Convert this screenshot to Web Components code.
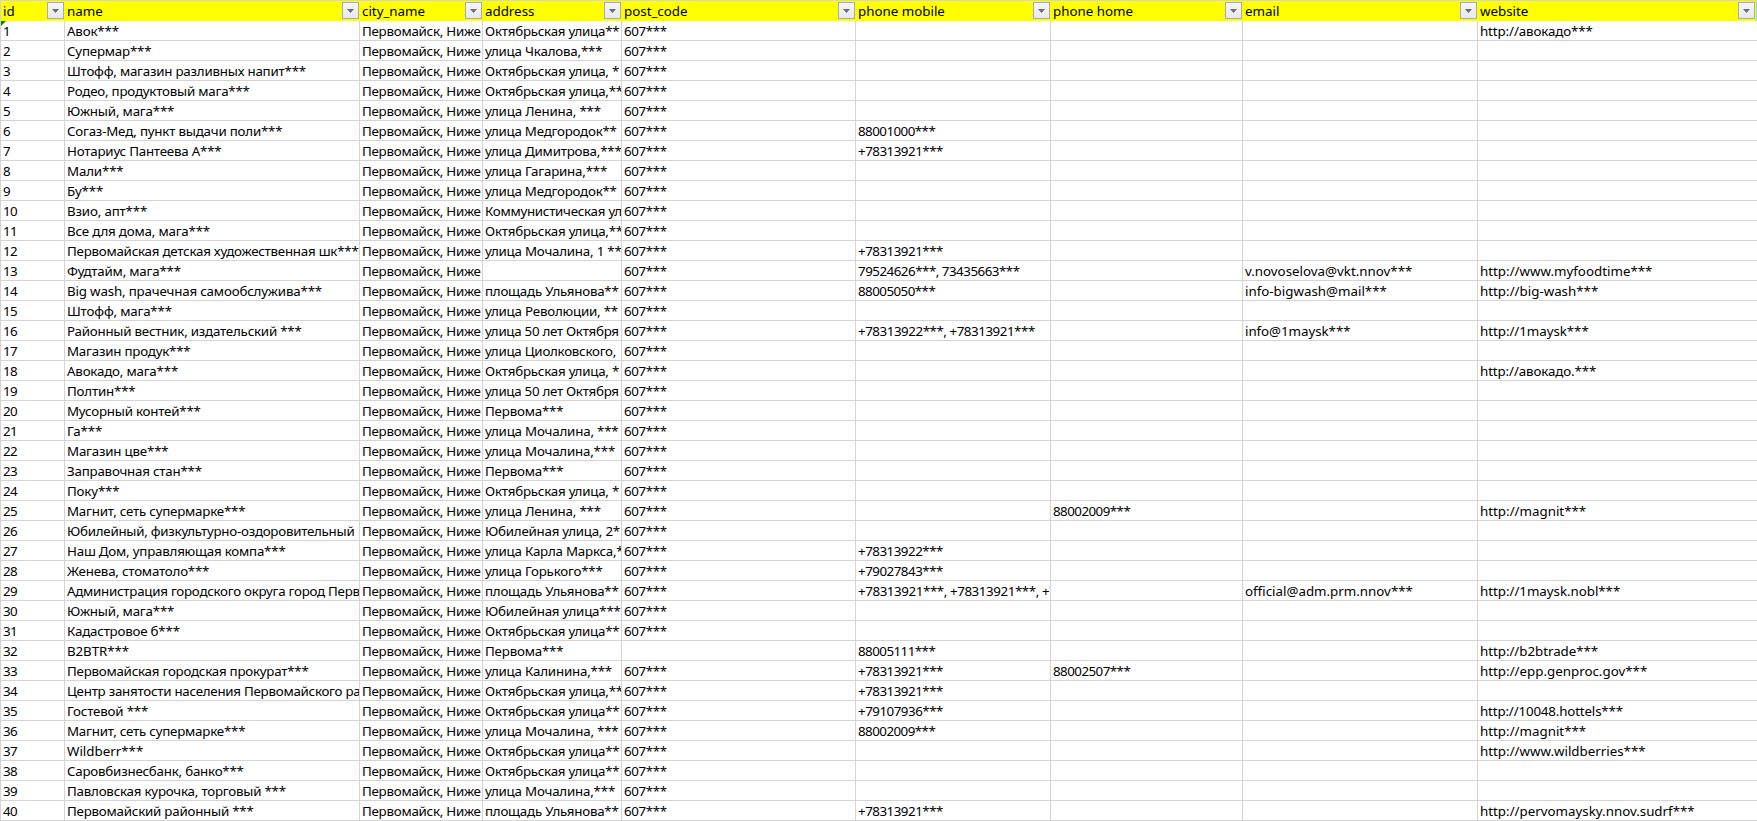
<!DOCTYPE html>
<html lang="ru">
<head>
<meta charset="utf-8">
<title>Sheet</title>
<style>
html,body{margin:0;padding:0;background:#fff;overflow:hidden}
body{font-family:"Noto Sans","Open Sans",sans-serif;font-size:13.33px;color:#000}
</style>
</head>
<body>
<xl-sheet id="sheet"></xl-sheet>
<script>
const COLS='64px 295px 123px 139px 234px 195px 192px 235px 279px';

class XlSheet extends HTMLElement{
  constructor(){super();this.attachShadow({mode:'open'}).innerHTML=`<style>
    :host{display:flex;flex-direction:column;width:1757px;height:821px;overflow:hidden;box-sizing:border-box;
      border-top:1px solid #d4d4d4;border-left:1px solid #d4d4d4;background:#fff}
  </style><slot></slot>`;}
}
class XlRow extends HTMLElement{
  constructor(){super();this.attachShadow({mode:'open'}).innerHTML=`<style>
    :host{display:grid;grid-template-columns:${COLS};height:20px;flex:none}
  </style><slot></slot>`;}
}
class XlHead extends HTMLElement{
  constructor(){super();this.attachShadow({mode:'open'}).innerHTML=`<style>
    :host{display:flex;align-items:flex-start;background:#ffff00;height:20px;min-width:0;overflow:hidden;box-sizing:border-box}
    :host([last]){border-right:1px solid #8fe8b0}
    .t{flex:1;min-width:0;padding-left:2px;line-height:21px;white-space:nowrap;overflow:hidden}
    .b{flex:none;width:17px;height:17px;margin:1px 1px 0 0;box-sizing:border-box;border:1px solid #a6a9b8;
       background:linear-gradient(#f6f7f9,#e6e8ee);display:flex;align-items:center;justify-content:center}
    svg{display:block}
  </style><span class="t"><slot></slot></span>
  <span class="b"><svg width="7" height="4" viewBox="0 0 7 4"><path d="M0 0H7L3.5 4Z" fill="#6e6e6e"/></svg></span>`;}
}
class XlCell extends HTMLElement{
  constructor(){super();this.attachShadow({mode:'open'}).innerHTML=`<style>
    :host{display:block;position:relative;height:20px;min-width:0;overflow:hidden;box-sizing:border-box;
      border-right:1px solid #d4d4d4;border-bottom:1px solid #d4d4d4;padding-left:2px;line-height:21px;white-space:nowrap}
    :host([last]){border-right:0}
    .flag{display:none;position:absolute;left:0;top:0;width:0;height:0;border-top:5px solid #0a7d0a;border-right:5px solid transparent}
    :host([flag]) .flag{display:block}
  </style><span class="flag"></span><slot></slot>`;}
}
customElements.define('xl-sheet',XlSheet);
customElements.define('xl-row',XlRow);
customElements.define('xl-head',XlHead);
customElements.define('xl-cell',XlCell);

const O='Октябрьская улица**', U='площадь Ульянова**';
const rows=[
['Авок***',O,'607***','','','','http://авокадо***'],
['Супермар***','улица Чкалова,***','607***'],
['Штофф, магазин разливных напит***','Октябрьская улица, *','607***'],
['Родео, продуктовый мага***','Октябрьская улица,**','607***'],
['Южный, мага***','улица Ленина, ***','607***'],
['Согаз-Мед, пункт выдачи поли***','улица Медгородок**','607***','88001000***'],
['Нотариус Пантеева А***','улица Димитрова,***','607***','+78313921***'],
['Мали***','улица Гагарина,***','607***'],
['Бу***','улица Медгородок**','607***'],
['Взио, апт***','Коммунистическая ул','607***'],
['Все для дома, мага***','Октябрьская улица,**','607***'],
['Первомайская детская художественная шк***','улица Мочалина, 1 **','607***','+78313921***'],
['Фудтайм, мага***','','607***','79524626***, 73435663***','','v.novoselova@vkt.nnov***','http://www.myfoodtime***'],
['Big wash, прачечная самообслужива***',U,'607***','88005050***','','info-bigwash@mail***','http://big-wash***'],
['Штофф, мага***','улица Революции, **','607***'],
['Районный вестник, издательский ***','улица 50 лет Октября','607***','+78313922***, +78313921***','','info@1maysk***','http://1maysk***'],
['Магазин продук***','улица Циолковского,','607***'],
['Авокадо, мага***','Октябрьская улица, *','607***','','','','http://авокадо.***'],
['Полтин***','улица 50 лет Октября','607***'],
['Мусорный контей***','Первома***','607***'],
['Га***','улица Мочалина, ***','607***'],
['Магазин цве***','улица Мочалина,***','607***'],
['Заправочная стан***','Первома***','607***'],
['Поку***','Октябрьская улица, *','607***'],
['Магнит, сеть супермарке***','улица Ленина, ***','607***','','88002009***','','http://magnit***'],
['Юбилейный, физкультурно-оздоровительный','Юбилейная улица, 2*','607***'],
['Наш Дом, управляющая компа***','улица Карла Маркса,*','607***','+78313922***'],
['Женева, стоматоло***','улица Горького***','607***','+79027843***'],
['Администрация городского округа город Перв',U,'607***','+78313921***, +78313921***, +7','','official@adm.prm.nnov***','http://1maysk.nobl***'],
['Южный, мага***','Юбилейная улица***','607***'],
['Кадастровое б***',O,'607***'],
['B2BTR***','Первома***','','88005111***','','','http://b2btrade***'],
['Первомайская городская прокурат***','улица Калинина,***','607***','+78313921***','88002507***','','http://epp.genproc.gov***'],
['Центр занятости населения Первомайского ра','Октябрьская улица,**','607***','+78313921***'],
['Гостевой ***',O,'607***','+79107936***','','','http://10048.hottels***'],
['Магнит, сеть супермарке***','улица Мочалина, ***','607***','88002009***','','','http://magnit***'],
['Wildberr***',O,'607***','','','','http://www.wildberries***'],
['Саровбизнесбанк, банко***',O,'607***'],
['Павловская курочка, торговый ***','улица Мочалина,***','607***'],
['Первомайский районный ***',U,'607***','+78313921***','','','http://pervomaysky.nnov.sudrf***'],
];
/* the reference font is narrower than Noto Sans for digits and Cyrillic, not for Latin */
function tracking(s){
  if(!s)return '';
  const digits=(s.match(/[0-9]/g)||[]).length, cyr=(s.match(/[\u0400-\u04FF]/g)||[]).length;
  return ((-0.72*digits-0.28*cyr)/s.length).toFixed(3)+'px';
}
const sheet=document.getElementById('sheet');
const heads=['id','name','city_name','address','post_code','phone mobile','phone home','email','website'];
const hr=document.createElement('xl-row');
heads.forEach((h,i)=>{const c=document.createElement('xl-head');c.textContent=h;if(i===8)c.setAttribute('last','');hr.append(c);});
sheet.append(hr);
rows.forEach((r,i)=>{
  const tr=document.createElement('xl-row');
  const vals=[String(i+1),r[0],'Первомайск, Ниже',r[1],r[2]||'',r[3]||'',r[4]||'',r[5]||'',r[6]||''];
  vals.forEach((v,j)=>{
    const c=document.createElement('xl-cell');c.textContent=v;
    c.style.letterSpacing=tracking(v);
    if(j===8)c.setAttribute('last','');
    if(i===0&&j===0)c.setAttribute('flag','');
    tr.append(c);
  });
  sheet.append(tr);
});
</script>
</body>
</html>
